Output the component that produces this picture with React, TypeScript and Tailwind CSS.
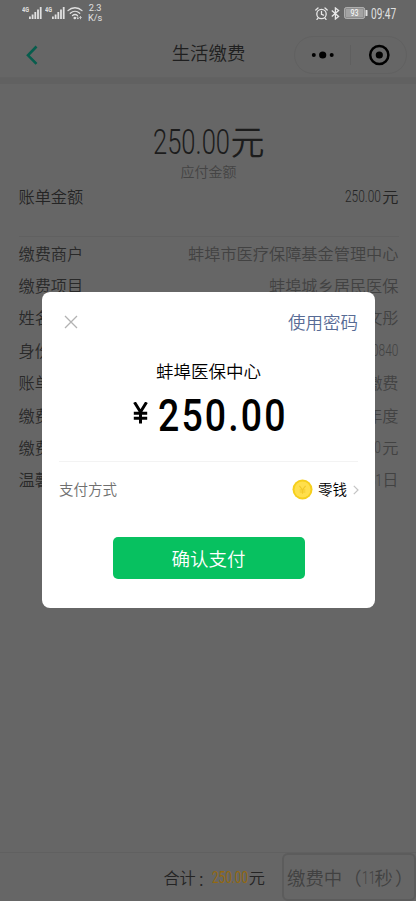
import React from 'react';

type NumProps = { children: string; box: string; text: string };

/* Condensed numerals: the outer box reserves the narrowed width. */
function Num({ children, box, text }: NumProps) {
  return (
    <span className={`inline-block whitespace-nowrap ${box}`}>
      <span className={`inline-block origin-left font-['Roboto'] ${text}`}>{children}</span>
    </span>
  );
}

function Row({ label, children }: { label: string; children: React.ReactNode }) {
  return (
    <div className="flex h-[32.4px] items-center justify-between text-[16.2px] leading-none">
      <span className="text-[#292929]">{label}</span>
      <span className="flex items-center text-[#424242]">{children}</span>
    </div>
  );
}

function Signal() {
  return (
    <svg width="20" height="14" viewBox="0 0 20 14" fill="#e0e0e0">
      <text x="0" y="6" fontSize="7.5" fontWeight="700" fontFamily="Roboto" textLength="7" lengthAdjust="spacingAndGlyphs">4G</text>
      <rect x="7" y="10.5" width="1.8" height="2.5" />
      <rect x="9.7" y="8.5" width="1.8" height="4.5" />
      <rect x="12.4" y="6" width="1.8" height="7" />
      <rect x="15.1" y="3.5" width="1.8" height="9.5" />
      <rect x="17.8" y="1" width="1.8" height="12" />
    </svg>
  );
}

function StatusBar() {
  return (
    <div className="flex h-[26px] items-center justify-between pr-[20px] pl-[22px] text-[#e0e0e0]">
      <div className="flex items-center">
        <Signal />
        <div className="w-[3px]" />
        <Signal />
        <svg className="ml-[2px]" width="16" height="14" viewBox="0 0 16 14" fill="none" stroke="#e0e0e0" strokeWidth="1.3" strokeLinecap="round">
          <path d="M1 4.6C5 .8 11 .8 15 4.6M3.3 7.2c2.8-2.5 6.6-2.5 9.4 0M5.5 9.6c1.5-1.3 3.5-1.3 5 0" />
          <circle cx="7.8" cy="12" r=".7" fill="#e0e0e0" />
          <path d="M10.8 10.7v2M9.9 12l.9.9.9-.9M13.5 12.8v-2M12.6 11.5l.9-.9.9.9" strokeWidth=".8" />
        </svg>
        <div className="ml-[5px] text-center font-['Roboto'] text-[9.2px] leading-[10px] font-normal">
          <div>2.3</div>
          <div>K/s</div>
        </div>
      </div>
      <div className="flex items-center">
        <svg width="13" height="13" viewBox="0 0 13 13" fill="none" stroke="#e8e8e8" strokeWidth="1.3" strokeLinecap="round">
          <circle cx="6.5" cy="7" r="4.7" />
          <path d="M6.5 4.5V7.4l2 .8M.8 3 3 1M12.2 3 10 1M3 11.2l-1 1.2M10 11.2l1 1.2" />
        </svg>
        <svg className="ml-[3px]" width="9" height="13" viewBox="0 0 9 13" fill="none" stroke="#e8e8e8" strokeWidth="1.3">
          <path d="M.8 3.4 7.6 9.4 4.4 12V1l3.2 2.6L.8 9.6" />
        </svg>
        <svg className="ml-[4px]" width="24" height="12" viewBox="0 0 24 12">
          <rect x=".6" y=".6" width="20" height="10.8" rx="1.6" fill="#8a8a8a" stroke="#b4b4b4" />
          <rect x="2" y="2" width="17.2" height="8" fill="#a3a3a3" />
          <rect x="21.5" y="3" width="2" height="6" rx=".6" fill="#e0e0e0" />
          <text x="6.4" y="9.2" fontSize="9" fontFamily="Roboto" fontWeight="400" fill="#fff" textLength="8" lengthAdjust="spacingAndGlyphs">93</text>
        </svg>
        <Num box="ml-[3px] w-[25px] text-[14px] leading-[18px]" text="scale-x-[0.72] font-normal">09:47</Num>
      </div>
    </div>
  );
}

function NavBar() {
  return (
    <header className="flex h-[52px] items-center border-b border-[#626262] pt-[6px]">
      <div className="w-[137px] pl-[25px]">
        <svg width="14" height="20" viewBox="0 0 14 20" fill="none" stroke="#075d4d" strokeWidth="2.6">
          <path d="M11.5 1.5 3 10.3l8.5 8.5" />
        </svg>
      </div>
      <h1 className="mt-[-4px] w-[143px] text-center text-[18.4px] leading-none text-[#1f1f1f]">生活缴费</h1>
      <div className="ml-[14px] flex h-[38px] w-[113px] items-center rounded-full border border-[#616161]">
        <svg width="111" height="30" viewBox="0 0 111 30">
          <circle cx="18.8" cy="15" r="2" />
          <circle cx="27.7" cy="15" r="3.6" />
          <circle cx="36.7" cy="15" r="2" />
          <path d="M55.5 5v20" stroke="#5f5f5f" />
          <circle cx="84.3" cy="15" r="9.1" fill="none" stroke="#000" strokeWidth="2.5" />
          <circle cx="84.3" cy="15" r="3.6" />
        </svg>
      </div>
    </header>
  );
}

function Bill() {
  return (
    <main className="flex-1 border-t-[6px] border-[#616161] pr-[17.5px] pl-[18.5px]">
      <div className="mt-[39px] flex h-[36px] items-center justify-center text-[34px] leading-none text-[#1c1c1c]">
        <Num box="w-[78px]" text="scale-x-[0.73] text-[35px]">250.00</Num>
        <span>元</span>
      </div>
      <p className="mt-[3px] text-center text-[14px] leading-[18px] text-[#444]">应付金额</p>
      <div className="mt-[6px] flex h-[20px] items-center justify-between text-[16.2px] leading-none text-[#242424]">
        <span>账单金额</span>
        <span className="flex items-center">
          <Num box="w-[37px]" text="scale-x-[0.7] text-[17px]">250.00</Num>元
        </span>
      </div>
      <div className="mt-[29.6px] border-t border-[#606060]">
        <Row label="缴费商户">蚌埠市医疗保障基金管理中心</Row>
        <Row label="缴费项目">蚌埠城乡居民医保</Row>
        <Row label="姓名">文彤</Row>
        <Row label="身份"><Num box="w-[27px]" text="scale-x-[0.7] text-[17px]">0840</Num></Row>
        <Row label="账单">缴费</Row>
        <Row label="缴费">年度</Row>
        <Row label="缴费"><Num box="w-[37px]" text="scale-x-[0.7] text-[17px]">250.00</Num>元</Row>
        <Row label="温馨"><Num box="w-[13px]" text="scale-x-[0.7] text-[17px]">31</Num>日</Row>
      </div>
    </main>
  );
}

function Footer() {
  return (
    <footer className="flex h-[49px] items-center justify-end border-t border-[#606060]">
      <div className="flex items-center text-[16.2px] leading-none text-[#242424]">
        <span>合计</span>
        <span className="mt-[3px] ml-[2px] w-[14px] text-[14px] leading-none">：</span>
        <Num box="w-[37px] text-[#93690f]" text="scale-x-[0.69] text-[17px] font-normal">250.00</Num>
        <span>元</span>
      </div>
      <div className="ml-[17px] flex h-[48px] w-[134px] items-center rounded-[6px] border-2 border-[#5c5c5c] pl-[3px] text-[18.4px] leading-none whitespace-nowrap text-[#414141]">
        <span>缴费中</span>
        <span className="ml-[1px]">（</span>
        <Num box="w-[13px]" text="scale-x-[0.65]">11</Num>
        <span>秒</span>
        <span className="ml-[2px]">）</span>
      </div>
    </footer>
  );
}

function PayDialog() {
  return (
    <section className="absolute top-[292px] left-[42px] flex h-[316px] w-[333px] flex-col rounded-[8px] bg-white px-[17px]">
      <div className="mt-[18px] flex h-[24px] items-center justify-between pl-[5px]">
        <svg width="14" height="14" viewBox="0 0 14 14" stroke="#b2b2b2" strokeWidth="1.3">
          <path d="m1 1 12 12M13 1 1 13" />
        </svg>
        <span className="text-[17.5px] leading-none text-[#576b95]">使用密码</span>
      </div>
      <p className="mt-[25px] text-center text-[17.5px] leading-[24px] text-black">蚌埠医保中心</p>
      <div className="mt-[9px] flex h-[50px] justify-center font-['Roboto'] font-medium text-black">
        <svg className="mt-[10px] mr-[10px]" width="15" height="22" viewBox="0 0 15 22" fill="none" stroke="#000" strokeWidth="3">
          <path d="m1.5.3 6 9.7 6-9.7M7.5 9v12.5M.8 11.3h13.4M.8 16.3h13.4" />
        </svg>
        <Num box="w-[126px] text-[43.5px] leading-[50px] tracking-[2.5px]" text="scale-x-[0.86]">250.00</Num>
      </div>
      <div className="mt-[19px] flex h-[56px] items-center justify-between border-t border-[#f3f3f3] text-[14.5px] leading-none">
        <span className="text-[#6f6f6f]">支付方式</span>
        <span className="mr-[-1px] flex items-center text-black">
          <svg className="mr-[5px]" width="21" height="21" viewBox="0 0 21 21" fill="none">
            <circle cx="10.5" cy="10.5" r="10" fill="#f6cf1c" />
            <circle cx="10.5" cy="10.5" r="8" fill="#ffdf4c" />
            <path d="m7.4 6.8 3.1 4 3.1-4M10.5 10.8v4M7.7 11h5.6M7.7 13h5.6" stroke="#f2c928" strokeWidth="1.1" />
          </svg>
          零钱
          <svg className="ml-[6px]" width="6" height="10" viewBox="0 0 6 10" fill="none" stroke="#c4c4c4" strokeWidth="1.2">
            <path d="m.8.8 4.2 4.2L.8 9.2" />
          </svg>
        </span>
      </div>
      <button className="mt-[20px] ml-[53.5px] h-[42px] w-[192px] rounded-[5px] bg-[#07c160] text-[18.5px] leading-none text-white">确认支付</button>
    </section>
  );
}

export default function App() {
  return (
    <div className="relative flex h-[901px] w-[416px] flex-col overflow-hidden bg-[#666] font-['Noto_Sans_CJK_SC','Noto_Sans',sans-serif] font-[350]">
      <StatusBar />
      <NavBar />
      <Bill />
      <Footer />
      <PayDialog />
    </div>
  );
}
